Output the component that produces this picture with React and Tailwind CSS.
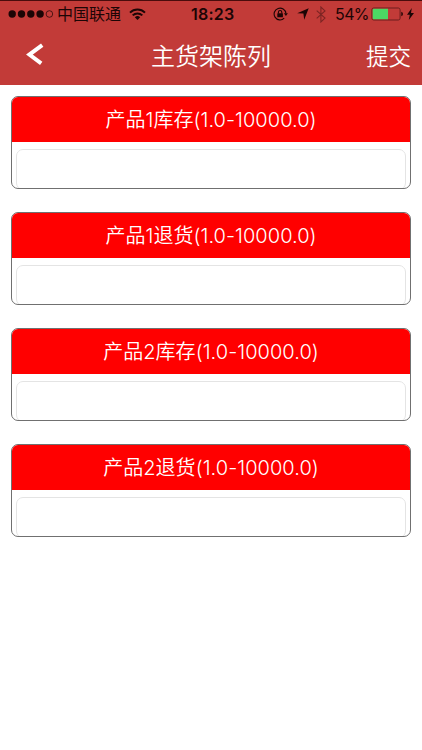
import React from 'react';

const fields = [
  { id: 1, label: '产品1库存(1.0-10000.0)' },
  { id: 2, label: '产品1退货(1.0-10000.0)' },
  { id: 3, label: '产品2库存(1.0-10000.0)' },
  { id: 4, label: '产品2退货(1.0-10000.0)' },
];

// Carrier dots, network name and wifi on the left, clock in the middle, battery on the right
function StatusBar() {
  return (
    <div className="flex h-[27px] items-center border-t border-[#4a0c0c] text-[#1c0505]">
      <div className="flex w-[191px] items-center pl-2">
        <svg className="h-[10px] w-[46px] shrink-0" viewBox="0 0 46 10">
          <g fill="currentColor">
            <circle cx="4.2" cy="5" r="3.7" />
            <circle cx="13.5" cy="5" r="3.7" />
            <circle cx="22.8" cy="5" r="3.7" />
            <circle cx="32.1" cy="5" r="3.7" />
          </g>
          <circle cx="41.4" cy="5" r="3.3" fill="none" stroke="currentColor" strokeWidth="0.7" />
        </svg>
        <span className="ml-[3px] w-[65px] whitespace-nowrap text-[16px] leading-5">中国联通</span>
        <svg className="ml-[7px] h-[12px] w-[17px]" viewBox="0 0 17 12">
          <g fill="none" stroke="currentColor" strokeWidth="2">
            <path d="M1 4.6a10.6 10.6 0 0 1 15 0" />
            <path d="M3.7 7.4a6.8 6.8 0 0 1 9.6 0" />
          </g>
          <path d="M8.5 12L5.8 9.3a3.8 3.8 0 0 1 5.4 0z" fill="currentColor" />
        </svg>
      </div>
      <span className="w-[82px] text-[16px] font-semibold leading-5 tracking-[0.2px]">18:23</span>
      <svg className="h-[14px] w-[15px]" viewBox="0 0 15 14">
        <path d="M11.2 11.2A5.9 5.9 0 1 1 12.9 6.4" fill="none" stroke="currentColor" strokeWidth="1.1" />
        <path d="M10.9 6.2h4L12.9 9z" fill="currentColor" />
        <rect x="4.3" y="6.2" width="5.6" height="4.1" rx="0.5" fill="currentColor" />
        <path d="M5.4 6.4V5.2a1.7 1.7 0 0 1 3.4 0v1.2" fill="none" stroke="currentColor" strokeWidth="1.1" />
      </svg>
      <svg className="ml-[9px] h-[12px] w-[12px]" viewBox="0 0 12 12">
        <path d="M11.7 0.3L7.2 11.7l-0.8-6.1L0.2 5.2z" fill="currentColor" />
      </svg>
      <svg className="ml-[7px] h-[17px] w-[10px] text-[#7c2423]" viewBox="0 0 10 17">
        <path d="M0.7 4.6l8.3 7.5L4.9 16V1L9 4.9 0.7 12.4" fill="none" stroke="currentColor" strokeWidth="1.1" />
      </svg>
      <span className="ml-[9px] w-[35px] whitespace-nowrap text-[16px] leading-5 tracking-[-0.6px]">54%</span>
      <svg className="ml-px h-[14px] w-[33px]" viewBox="0 0 33 14">
        <rect x="0.9" y="1" width="28.2" height="12" rx="1.8" fill="none" stroke="#6b1d1c" />
        <path d="M2.7 1.7H17v10.6H2.7a1 1 0 0 1-1-1V2.7a1 1 0 0 1 1-1z" fill="#4cd964" />
        <path d="M30.3 4.8a2.3 2.3 0 0 1 0 4.4z" fill="currentColor" />
      </svg>
      <svg className="ml-[3px] h-[12px] w-[7px]" viewBox="0 0 7 12">
        <path d="M4.8 0L0 6.7h2.8L1.8 12 7 5H4z" fill="currentColor" />
      </svg>
    </div>
  );
}

function NavBar() {
  return (
    <div className="grid h-[58px] grid-cols-[100px_1fr_100px] items-center text-white">
      <button type="button" aria-label="返回" className="pb-1 pl-[26px] text-left">
        <svg className="block h-[23px] w-[19px]" viewBox="0 0 19 23">
          <path d="M16.2 2.2L3.4 11.6l11.8 8.8" fill="none" stroke="currentColor" strokeWidth="4" />
        </svg>
      </button>
      <h1 className="pt-0.5 text-center text-[24px] font-[350] leading-8">主货架陈列</h1>
      <button type="button" className="pr-[11px] pt-px text-right text-[22.5px] font-[350] leading-8">提交</button>
    </div>
  );
}

function FieldCard({ label }) {
  return (
    <div className="h-[93px] overflow-hidden rounded-[7px] border border-[#707070] bg-white">
      <div className="flex h-[45px] items-center justify-center bg-[#ff0000]">
        <span className="whitespace-nowrap text-[20px] font-[350] leading-7 tracking-[0.04px] text-white">{label}</span>
      </div>
      <div className="px-1 pt-[7px]">
        <input
          type="text"
          aria-label={label}
          className="h-[41px] w-full rounded-[7px] border border-[#e4e4e4] px-2 outline-none"
        />
      </div>
    </div>
  );
}

function App() {
  return (
    <div className="h-[750px] w-[422px] overflow-hidden bg-white font-['Inter','Noto_Sans_CJK_SC',sans-serif]">
      <header className="bg-[#c23b38]">
        <StatusBar />
        <NavBar />
      </header>
      <main className="flex flex-col gap-[23px] px-[11px] pt-[11px]">
        {fields.map((field) => (
          <FieldCard key={field.id} label={field.label} />
        ))}
      </main>
    </div>
  );
}

export default App;
